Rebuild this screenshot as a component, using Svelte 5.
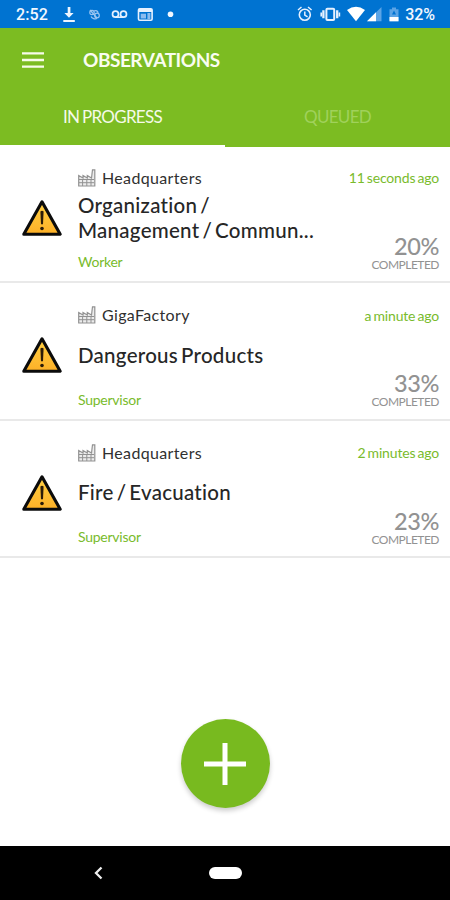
<script>
  const observations = [
    { site: 'Headquarters', title: ['Organization /', 'Management / Commun...'], role: 'Worker', time: '11 seconds ago', percent: 20 },
    { site: 'GigaFactory', title: ['Dangerous Products'], role: 'Supervisor', time: 'a minute ago', percent: 33 },
    { site: 'Headquarters', title: ['Fire / Evacuation'], role: 'Supervisor', time: '2 minutes ago', percent: 23 }
  ];
</script>

<div class="screen">
  <div class="status">
    <span class="clock">2:52</span>
    <svg class="notices" width="120" height="28" viewBox="56 0 120 28" fill="none" stroke="#e6f1ff">
      <path d="M67.7 7h2.7v6h3.2L69 17.8 64.400 13h3.300zM63.300 20h11.500v2H63.300z" fill="#eef6ff" stroke="none" />
      <g stroke="#9bc5f1" stroke-width="1.200">
        <circle cx="92" cy="12.500" r="2.200" /><circle cx="97" cy="15.500" r="2.300" />
        <path d="M90 10l7 8M91 16.500c1 2 4 3 6 2M94 11c2-1 4 0 4 2" />
      </g>
      <circle cx="115.500" cy="14.200" r="3" stroke-width="1.700" />
      <circle cx="123.500" cy="14.200" r="3" stroke-width="1.700" />
      <path d="M115.500 17.200h8" stroke-width="1.600" />
      <rect x="138.500" y="8.700" width="13.600" height="11.600" rx="1.200" stroke-width="1.600" />
      <path d="M138.500 10.500h13.600" stroke-width="3" />
      <path d="M140.700 13.700h5.300v4.800h-5.300z" fill="#8bbcf0" stroke="none" />
      <path d="M148.900 13v6" stroke="#8bbcf0" stroke-width="3" />
      <circle cx="170.500" cy="14.300" r="2.800" fill="#f2f8ff" stroke="none" />
    </svg>
    <svg class="system" width="106" height="28" viewBox="296 0 106 28" fill="none" stroke="#e6f1ff">
      <circle cx="304.800" cy="14.700" r="5.500" stroke-width="1.600" />
      <path d="M298 10l3.500-3M311.600 10L308 7M304.800 11.500v3.700l2.800 1.700" stroke-width="1.500" />
      <rect x="326.400" y="8.700" width="7.800" height="11.400" rx="1" stroke-width="2" />
      <path d="M323.400 10.200v8M337.200 10.200v8" stroke-width="2.300" />
      <path d="M321.200 12.500v4M339.400 12.500v4" stroke-width="1.600" />
      <path d="M347 10q9-6.500 18 0L356 21.300z" fill="#fff" stroke="none" />
      <path d="M367 21.300L381.500 7v14.300z" fill="#5ba4e6" stroke="none" />
      <path d="M367 21.300l9-9v9z" fill="#fff" stroke="none" />
      <path d="M392 7.500h4v1.700h2.500v12h-9v-12h2.500z" fill="#5ba4e6" stroke="none" />
      <path d="M389.500 17h9v4.300h-9z" fill="#fff" stroke="none" />
      <path d="M394 10.500l-2 4h4z" fill="#0073d1" stroke="none" />
    </svg>
    <span class="battery">32%</span>
  </div>

  <header>
    <div class="bar">
      <svg width="22" height="16" viewBox="0 0 22 16"><path d="M0 1.400h22M0 8h22M0 14.600h22" stroke="#f7fbea" stroke-width="2.400" /></svg>
      <h1>OBSERVATIONS</h1>
    </div>
    <nav>
      <div class="tab active"><span>IN PROGRESS</span></div>
      <div class="tab"><span>QUEUED</span></div>
    </nav>
  </header>

  <main>
    {#each observations as item}
      <article>
        <svg class="warning" width="42" height="38" viewBox="0 0 42 38">
          <defs>
            <linearGradient id="amber" x1="0" y1="0" x2="0" y2="1"><stop stop-color="#ffd044" /><stop offset="1" stop-color="#fdb027" /></linearGradient>
          </defs>
          <path d="M21 2.800L39.200 35.200H2.800z" fill="url(#amber)" stroke="#0b0b0b" stroke-width="3.100" stroke-linejoin="round" />
          <path d="M19.400 12.500q1.600-1.500 3.200 0l-.6 12.800h-2z" fill="#2b1b08" />
          <circle cx="21" cy="29.500" r="1.800" fill="#2b1b08" />
        </svg>
        <div class="details">
          <div class="site">
            <svg width="18" height="18" viewBox="0 0 18 18" fill="none" stroke="#929292">
              <path d="M.7 17V6.500L5 9V6.500L9.300 9V6.500L13.500 9l1-8.200h2.300V17z" fill="#ececec" stroke-width="1.200" />
              <path d="M1 10.500h15M1 13.700h15M4.600 10.500V17M8.800 10.500V17M13 10.500V17" stroke-width="1" />
            </svg>
            <span>{item.site}</span>
          </div>
          <h2>{#each item.title as line}<span>{line}</span>{/each}</h2>
          <div class="role">{item.role}</div>
        </div>
        <div class="meta">
          <div class="time">{item.time}</div>
          <div class="progress">
            <strong>{item.percent}%</strong>
            <span>COMPLETED</span>
          </div>
        </div>
      </article>
    {/each}
    <button aria-label="Add observation">
      <svg width="42" height="42" viewBox="0 0 42 42"><path d="M21 0v42M0 21h42" stroke="#fff" stroke-width="5" /></svg>
    </button>
  </main>

  <footer>
    <svg width="9" height="14" viewBox="0 0 9 14"><path d="M7.500 1.500L2 7l5.500 5.500" fill="none" stroke="#eee" stroke-width="2.300" /></svg>
    <div class="home"></div>
  </footer>
</div>

<style>
  :global(body) { margin: 0; }
  .screen {
    width: 450px; height: 900px; overflow: hidden; background: #fff;
    display: flex; flex-direction: column; font-family: Lato, "Open Sans", sans-serif;
    font-variant-ligatures: none;
  }
  .status {
    height: 28px; flex: none; box-sizing: border-box; padding: 0 15px 0 16px; background: #0073d1;
    display: flex; align-items: center; color: #f2f8ff; font: 500 16px/28px Roboto, sans-serif;
  }
  .status span { position: relative; top: 1px; white-space: nowrap; }
  .clock { width: 40px; letter-spacing: .15px; }
  .system { margin-left: auto; }
  .battery { width: 33px; text-align: right; letter-spacing: -.1px; }
  header { height: 119px; flex: none; background: #7cbc22; display: flex; flex-direction: column; }
  .bar { height: 64px; display: flex; align-items: center; padding-left: 22px; }
  h1 { margin: 0 0 0 39px; font-size: 19px; line-height: 24px; font-weight: 700; color: #f9fdf0; letter-spacing: -.47px; }
  nav { flex: 1; display: flex; }
  .tab {
    flex: 1; box-sizing: border-box; border-bottom: 2.500px solid transparent; padding-top: 13px;
    text-align: center; font-size: 17px; line-height: 24px; letter-spacing: -.7px; color: #a0d15b;
  }
  .active { border-color: #fff; color: #f5fae9; }
  .active span { word-spacing: -1px; }
  main { flex: 1; display: flex; flex-direction: column; margin-top: -1.500px; }
  article {
    height: 137.500px; flex: none; box-sizing: border-box; border-bottom: 2px solid #e9e9e9;
    display: flex; align-items: stretch; padding: 0 11px 0 21px;
  }
  .warning { margin-top: 53px; flex: none; }
  .details { width: 260px; margin-left: 15px; display: flex; flex-direction: column; padding-top: 22px; }
  .site { height: 20px; display: flex; align-items: center; gap: 6px; font-size: 16px; line-height: 20px; letter-spacing: .35px; color: #303030; }
  h2 {
    height: 60px; margin: 0; display: flex; flex-direction: column; justify-content: center;
    font-size: 20.500px; line-height: 25px; font-weight: 500; color: #262626; letter-spacing: .27px; word-spacing: -2.400px; white-space: nowrap;
  }
  .role { margin-top: 5.500px; font-size: 14px; line-height: 18px; letter-spacing: -.25px; color: #79bb2c; }
  .meta { flex: 1; display: flex; flex-direction: column; justify-content: space-between; text-align: right; padding: 23.500px 0 9.500px; white-space: nowrap; }
  .time { font-size: 14px; line-height: 18px; letter-spacing: -.17px; word-spacing: -1.300px; color: #79bb2c; }
  .progress { display: flex; flex-direction: column; color: #929292; }
  .progress strong { font-size: 23.500px; line-height: 24px; font-weight: 500; letter-spacing: -.4px; }
  .progress span { font-size: 12px; line-height: 14px; letter-spacing: -.5px; }
  button {
    width: 89px; height: 89px; margin: 161px auto 0; padding: 0; border: 0; border-radius: 50%; background: #78ba1f;
    display: flex; align-items: center; justify-content: center; box-shadow: 0 3px 5px rgba(0, 0, 0, .2);
  }
  footer { height: 54px; flex: none; background: #000; display: flex; align-items: center; padding-left: 94px; box-sizing: border-box; }
  .home { width: 33px; height: 12px; border-radius: 6px; background: #fff; margin-left: 106px; }
</style>
